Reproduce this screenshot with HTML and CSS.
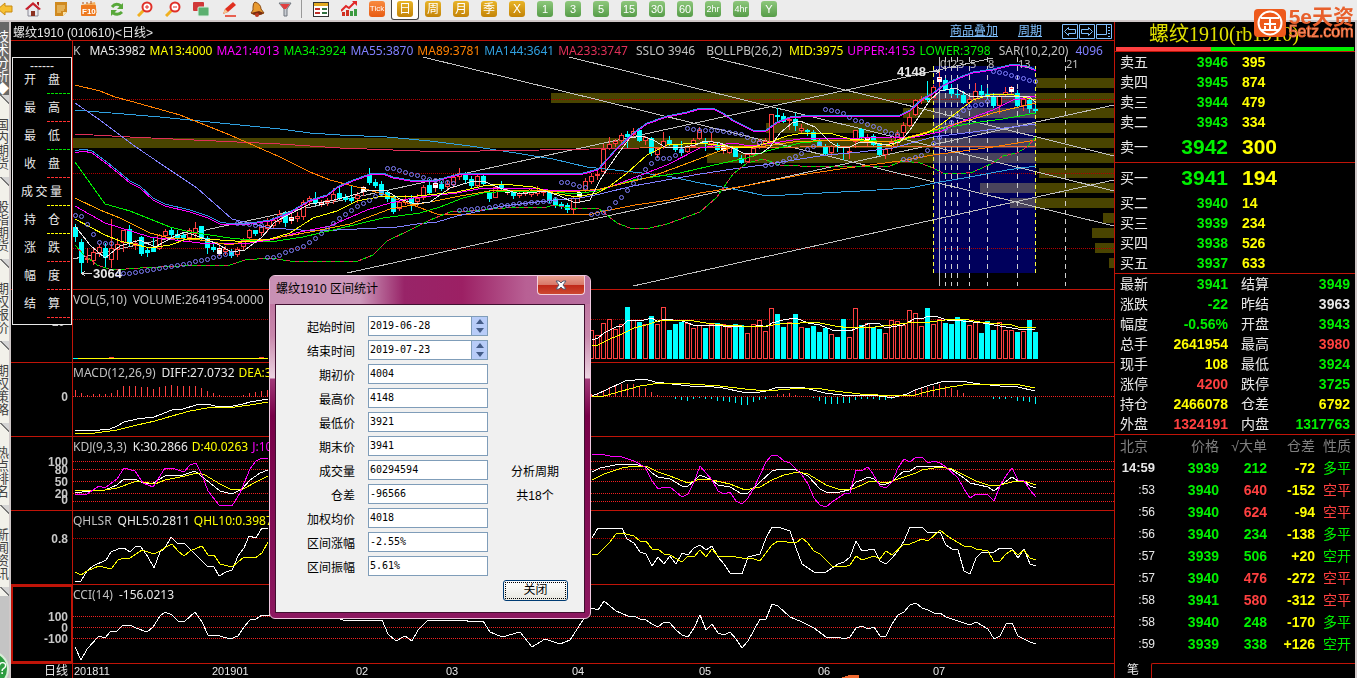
FILE: index.html
```html
<!DOCTYPE html>
<html lang="zh-CN">
<head>
    <meta charset="UTF-8">
    <meta name="viewport" content="width=device-width, initial-scale=1.0">
    <title>螺纹1910 日线</title>
    <link rel="stylesheet" href="styles.css">
</head>
<body>
    <header class="toolbar">
        <button class="tool" title="后退"><svg width="16" height="16" viewBox="0 0 16 16"><path d="M1 8L8 2v3h7v6H8v3z" fill="#f6c033" stroke="#c98a10"/></svg></button>
        <button class="tool" title="首页"><svg width="16" height="16" viewBox="0 0 16 16"><path d="M3 8l5-5 5 5v7H3z" fill="#e8e8ee" stroke="#8a8a96"/><path d="M0 8l8-7 8 7-2 1-6-5-6 5z" fill="#c8202c"/><path d="M12 1h2v4l-2-2z" fill="#a01820"/><path d="M6 10h4v5H6z" fill="#8a3020"/></svg></button>
        <button class="tool" title="资讯"><svg width="16" height="16" viewBox="0 0 16 16"><path d="M2 1h12v10l-4 4H2z" fill="#d08a20"/><path d="M4 5h8M4 7h8M4 9h7M4 11h4" stroke="#f7d68c"/><path d="M10 15v-4h4z" fill="#f8e4b0"/></svg></button>
        <button class="tool" title="F10"><svg width="18" height="16" viewBox="0 0 18 16"><path d="M1 4l14-3 2 11-14 3z" fill="#f5b060"/><rect x="1" y="4" width="15" height="11" rx="1" fill="#ee7a20"/><path d="M3 3V1M7 3V1M11 3V0" stroke="#b05010"/><text x="2" y="13" class="f10">F10</text></svg></button>
        <button class="tool" title="刷新"><svg width="16" height="16" viewBox="0 0 16 16"><path d="M3 6q4-5 9-1" fill="none" stroke="#58a83a" stroke-width="3"/><path d="M14 2v6H8z" fill="#58a83a"/><path d="M13 11q-4 4-9 1" fill="none" stroke="#58a83a" stroke-width="3"/><path d="M2 15V9h6z" fill="#58a83a"/></svg></button>
        <button class="tool" title="放大"><svg width="16" height="16" viewBox="0 0 16 16"><path d="M1 15l6-6" stroke="#f0b020" stroke-width="3"/><circle cx="10" cy="6" r="4.5" fill="#fff" stroke="#e03028" stroke-width="2"/><path d="M8 6h4M10 4v4" stroke="#e03028"/></svg></button>
        <button class="tool" title="缩小"><svg width="16" height="16" viewBox="0 0 16 16"><path d="M1 15l6-6" stroke="#f0b020" stroke-width="3"/><circle cx="10" cy="6" r="4.5" fill="#fff" stroke="#e03028" stroke-width="2"/><path d="M8 6h4" stroke="#e03028"/></svg></button>
        <button class="tool" title="叠加"><svg width="16" height="16" viewBox="0 0 16 16"><rect x="0" y="1" width="11" height="9" rx="1" fill="#d03838"/><rect x="5" y="6" width="11" height="9" rx="1" fill="#5cb070" stroke="#d8efe0"/></svg></button>
        <button class="tool" title="画线"><svg width="16" height="16" viewBox="0 0 16 16"><path d="M2 13l2-5 8-7 3 3-8 7z" fill="#e03020"/><path d="M2 13l2-5 3 3z" fill="#f6c890"/><path d="M4 15h11" stroke="#e86050" stroke-width="2"/></svg></button>
        <button class="tool" title="预警"><svg width="16" height="16" viewBox="0 0 16 16"><path d="M6 1q6 2 6 7l3 4q-7 4-13 0 3-3 2-6 0-4 2-5z" fill="#e89a30" stroke="#8a4a10"/><path d="M2 12q7 4 13 0l-5-2z" fill="#7a2c10"/><circle cx="8" cy="14" r="2" fill="#c03820"/></svg></button>
        <button class="tool" title="筛选"><svg width="16" height="16" viewBox="0 0 16 16"><path d="M2 2h12l-4 6v7H7V8z" fill="#c8ccd2" stroke="#70767e"/><path d="M3 3h10l-4 5H7z" fill="#e04040"/></svg></button>
        <span class="split"></span>
        <button class="tool" title="报价"><svg width="16" height="16" viewBox="0 0 16 16"><rect x=".5" y="1.500" width="15" height="14" fill="#fff" stroke="#333"/><path d="M1 3.500h14" stroke="#e0a820" stroke-width="3"/><path d="M2 8h5M2 12h5" stroke="#c03028" stroke-width="2"/><path d="M9 8h5M9 12h5" stroke="#307040" stroke-width="2"/></svg></button>
        <button class="tool" title="分时"><svg width="16" height="16" viewBox="0 0 16 16"><path d="M1 15v-4h3v4zM5 15V9h3v6z" fill="#d03020"/><path d="M9 15v-5h3v5zM13 15V8h3v7z" fill="#3c9a40"/><path d="M0 10l5-5 3 2 6-6" fill="none" stroke="#e02828" stroke-width="2"/><path d="M11 0h5v5z" fill="#e02828"/></svg></button>
        <button class="tool" title="Tick"><span class="chip tick">Tick</span></button>
        <button class="tool active" title="日线"><span class="chip gold">日</span></button>
        <button class="tool" title="周线"><span class="chip gold">周</span></button>
        <button class="tool" title="月线"><span class="chip gold">月</span></button>
        <button class="tool" title="季线"><span class="chip gold">季</span></button>
        <button class="tool" title="自定义"><span class="chip gold">X</span></button>
        <button class="tool"><span class="chip">1</span></button>
        <button class="tool"><span class="chip">3</span></button>
        <button class="tool"><span class="chip">5</span></button>
        <button class="tool"><span class="chip">15</span></button>
        <button class="tool"><span class="chip">30</span></button>
        <button class="tool"><span class="chip">60</span></button>
        <button class="tool"><span class="chip small">2hr</span></button>
        <button class="tool"><span class="chip small">4hr</span></button>
        <button class="tool"><span class="chip">Y</span></button>
    </header>

    <main class="workspace">
        <nav class="side">
            <button class="tab current">技术分析◆</button>
            <button class="tab">国内期货</button>
            <button class="tab">股指期货</button>
            <button class="tab">期权报价</button>
            <button class="tab">期权策略</button>
            <button class="tab">热点排名</button>
            <button class="tab">新闻资讯</button>
            <span class="help">?</span>
        </nav>

        <section class="charts">
            <div class="caption">
                <span>螺纹1910 (010610)&lt;日线&gt;</span>
                <div class="links">
                    <a href="#">商品叠加</a>
                    <a href="#">周期</a>
                    <div class="winbtns">
                        <button title="左移"><svg width="16" height="15"><path d="M.5.5h15v14H.5zM2.500 7.500l4-4v2h7v4h-7v2z"/></svg></button>
                        <button title="右移"><svg width="16" height="15"><path d="M.5.5h15v14H.5zM13.500 7.500l-4-4v2h-7v4h7v2z"/></svg></button>
                        <button title="布局"><svg width="16" height="15"><path d="M.5.5h15v14H.5zM10.500 0v10.500M0 10.500h10.500M12 3.500h2M12 6.500h2M12 9.500h2M12 12.500h2"/></svg></button>
                    </div>
                </div>
            </div>

            <div class="panel">
                <div class="axis">
                    <div class="summary">
                        <p class="dashes">------</p>
                        <p class="up">开<span>盘</span></p>
                        <p class="down">最<span>高</span></p>
                        <p class="up">最<span>低</span></p>
                        <p class="down">收<span>盘</span></p>
                        <p class="flat wide">成<span>交</span><span>量</span></p>
                        <p class="flat">持<span>仓</span></p>
                        <p class="down">涨<span>跌</span></p>
                        <p class="down">幅<span>度</span></p>
                        <p class="down">结<span>算</span></p>
                    </div>
                </div>
                <div class="plot">
                    <svg class="kline" height="248">
                        <g transform="translate(-73 -41)">
                            <g fill="#4a4400">
                                <rect x="1036" y="78" width="78" height="10"/>
                                <rect x="551" y="93" width="563" height="10"/>
                                <rect x="903" y="108" width="211" height="10"/>
                                <rect x="766" y="123" width="348" height="10"/>
                                <rect x="73" y="138" width="1041" height="10"/>
                                <rect x="707" y="153" width="407" height="10"/>
                                <rect x="1039" y="168" width="75" height="10"/>
                                <rect x="980" y="183" width="134" height="10"/>
                                <rect x="1010" y="198" width="104" height="10"/>
                                <rect x="1103" y="213" width="11" height="10"/>
                                <rect x="1092" y="228" width="22" height="10"/>
                                <rect x="1095" y="243" width="19" height="10"/>
                                <rect x="1109" y="258" width="5" height="10"/>
                            </g>
                            <rect class="range" x="933" y="66" width="103" height="207"/>
                            <path class="grid" d="M73 99.500H1114M73 173.500H1114M73 248.500H1114"/>
                            <path class="gann" d="M423 57L1114 226M569 57L1114 191M711 57L1114 156M73 259L993 58M347 273L1114 105M633 286L1114 180"/>
                            <path class="fib" d="M945.500 57V286M951.500 57V286M957.500 57V286M969.500 57V286M987.500 57V286M1017.500 57V286M1065.500 57V286"/>
                            <path class="gann" d="M939.500 57V286"/>
                            <path class="edge" d="M933.500 66V273M1035.500 66V273"/>
                            <g id="candles"></g>
                            <g class="line">
                                <polyline stroke="#30a0e0" points="75,110 160,117 280,129 310,133 340,135 387,137 430,141 470,146 503,151 553,159 587,167 633,172 667,176 700,183 733,189 767,196 803,194 860,191 910,188 940,182 970,177 1007,170 1036,166"/>
                                <polyline stroke="#e03058" points="75,134 130,137 280,144 340,148 420,151 480,151 540,150 640,148"/>
                                <polyline stroke="#f06a30" points="640,148 800,147 1036,146"/>
                                <polyline stroke="#ff8000" points="75,85 100,91 115,97 130,101 180,115 230,135 280,157 310,172 330,180 380,193 410,204 437,214 540,214 570,215 592,214 600,212 635,205 670,200 700,193 745,186 765,182 800,175 840,169 870,165 900,161 933,155 993,147 1036,140"/>
                                <polyline stroke="#8080ff" points="75,103 100,120 133,145 167,168 197,188 232,219 253,224 270,228 317,231 397,227 417,224 437,222 457,216 503,206 537,202 557,200 580,198 600,194 633,186 700,174 733,169 763,165 800,159 827,155 860,152 893,148 933,137 1036,124"/>
                                <polyline stroke="#ff00ff" points="75,153 83,151 92,153 107,164 118,173 130,183 140,188 153,200 165,206 190,212 208,218 220,224 232,225 250,224 270,221 290,213 310,201 327,196 337,188 353,181 373,174 383,174 393,178 410,181 437,181 447,178 463,174 520,174 550,175 583,174 598,170 617,149 633,134 647,124 667,117 687,113 700,109 713,109 723,114 733,121 753,131 766,131 777,123 790,118 813,116 900,116 910,111 923,99 933,94 943,86 960,78 973,73 993,70 1013,65 1027,67 1036,71"/>
                                <polyline stroke="#3090e8" points="75,151 83,149 92,151 107,162 118,171 130,181 140,186 153,198 165,204 190,210 208,216 220,222 232,224 250,223 270,220 290,212 310,200 327,195 337,187 353,180 373,173 383,173 393,177 410,180 437,180 447,177 463,173 520,173 550,174 583,173 598,169 617,148 633,133 647,123 667,116 687,112 700,108 713,108 723,113 733,120 753,130 766,130 777,122 790,117 813,115 900,115 910,110 923,98 933,93 943,85 960,77 973,72 993,69 1013,64 1027,66 1036,70"/>
                                <polyline id="lower" stroke="#e03050" points="75,245 84,255 97,265 112,270 140,268 200,265 230,265 245,260 270,258 290,261 333,262 358,261 373,255 387,241 410,230 430,220 450,212 470,211 517,207 547,207 553,205 570,208 598,208 617,223 630,228 650,228 667,224 700,212 717,197 733,174 747,163 763,159 780,165 800,166 860,166 890,166 903,161 920,163 933,168 943,173 960,174 973,172 993,163 1003,156 1017,153 1027,147 1036,137"/>
                                <polyline stroke="#00e000" stroke-dasharray="5 4" points="75,245 84,255 97,265 112,270 140,268 200,265 230,265 245,260 270,258 290,261 333,262 358,261 373,255 387,241 410,230 430,220 450,212 470,211 517,207 547,207 553,205 570,208 598,208 617,223 630,228 650,228 667,224 700,212 717,197 733,174 747,163 763,159 780,165 800,166 860,166 890,166 903,161 920,163 933,168 943,173 960,174 973,172 993,163 1003,156 1017,153 1027,147 1036,137"/>
                                <polyline stroke="#00f000" points="75,162 105,204 130,211 170,227 190,232 230,238 270,242 303,237 337,229 383,218 420,213 440,207 463,198 483,193 510,191 557,192 573,194 597,191 633,180 680,173 723,163 747,158 767,151 800,143 833,140 860,140 893,142 913,137 940,129 973,123 1003,119 1036,113"/>
                                <polyline stroke="#ff00ff" points="75,206 105,223 150,237 200,243 250,243 270,240 300,232 330,226 367,210 390,203 413,198 457,193 483,188 530,188 557,191 597,190 610,187 667,165 700,148 733,143 750,146 773,143 800,139 817,138 860,138 893,137 910,138 940,132 960,122 993,110 1013,100 1036,96"/>
                                <polyline stroke="#ffa000" points="75,198 100,210 120,218 150,233 170,238 200,240 230,245 250,240 270,239 310,232 350,224 390,209 430,202 460,196 490,191 530,190 570,192 600,189 650,177 683,165 717,152 733,147 766,146 793,142 833,140 860,141 890,142 927,132 973,119 993,113 1036,103"/>
                                <polyline stroke="#ffff00" points="75,219 105,235 120,241 150,248 170,245 190,238 220,240 250,242 270,239 290,233 313,218 337,211 357,201 383,196 417,196 457,192 483,186 503,184 533,187 553,193 577,197 597,193 610,186 627,173 647,155 667,145 700,143 733,147 750,148 770,142 787,136 803,133 833,134 850,139 860,139 890,146 907,138 927,133 943,123 960,110 973,100 990,95 1010,94 1027,98 1036,100"/>
                                <polyline stroke="#e8e8e8" points="75,226 90,245 105,258 120,246 140,240 155,247 175,236 185,232 200,237 215,243 232,252 245,250 262,237 275,222 290,214 310,204 330,201 350,196 370,190 385,190 400,199 415,204 430,202 450,188 470,182 483,181 500,188 520,194 545,191 560,196 575,203 590,200 600,180 615,158 630,138 643,136 655,141 665,147 680,148 695,145 705,141 720,143 735,149 745,154 762,153 770,147 780,133 792,123 800,121 815,127 830,142 840,148 850,147 860,142 870,142 885,145 900,142 910,130 920,115 930,100 940,91 955,88 970,96 990,97 1010,96 1030,97 1036,103"/>
                            </g>
                            <g id="sar"></g>
                            <g class="fibtext">
                                <text x="940" y="68">0</text><text x="946" y="68">1</text><text x="951" y="68">2</text><text x="958" y="68">3</text><text x="970" y="68">5</text><text x="988" y="68">8</text><text x="1018" y="68">13</text><text x="1066" y="68">21</text>
                            </g>
                            <path class="arrow" d="M939 71.500H931M936 69L939 71.500L936 74M82 273.500H92M85 271L82 273.500L85 276"/>
                            <text class="mark" x="897" y="76">4148</text>
                            <text class="mark" x="93" y="278">3064</text>
                        </g>
                    </svg>
                    <div class="legend">
                        <b class="k">K</b><span>MA5:3982</span><span class="yellow">MA13:4000</span><span class="magenta">MA21:4013</span><span class="green">MA34:3924</span><span class="violet">MA55:3870</span><span class="orange">MA89:3781</span><span class="sky">MA144:3641</span><span class="rose">MA233:3747</span><b class="sep">SSLO 3946</b><b class="sep">BOLLPB(26,2)</b><span class="yellow">MID:3975</span><span class="magenta">UPPER:4153</span><span class="green">LOWER:3798</span><b class="sep">SAR(10,2,20)</b><span class="violet">4096</span>
                    </div>
                </div>
            </div>

            <div class="panel">
                <div class="axis"><svg height="72"><text x="54" y="36">10</text></svg></div>
                <div class="plot">
                    <svg height="72">
                        <g transform="translate(-73 -290)">
                            <path class="grid" d="M73 319.500H1114"/>
                            <path d="M73 358.500H80" stroke="#00ffff"/>
                            <path d="M78 358.500H268" stroke="#ffff00"/>
                            <path d="M109 357.500h5M259 357.500h5" stroke="#ff4040"/>
                            <g id="volume"></g>
                            <g class="line">
                                <polyline stroke="#ffffff" points="592,340 598,338 604,333 616,327 622,326 628,320 640,321 652,318 658,322 664,319 682,321 688,323 693,325 723,326 742,326 753,327 760,325 766,327 772,323 783,320 796,318 808,323 820,325 832,330 850,331 860,327 870,323 880,324 885,328 903,325 916,318 922,319 928,316 935,316 947,320 963,321 983,323 1000,326 1018,329 1035,329"/>
                                <polyline stroke="#ffff00" points="592,346 598,345 610,339 622,334 634,328 646,325 658,321 670,320 688,320 706,323 723,325 742,326 754,327 766,326 780,324 800,323 815,322 835,326 850,328 875,327 900,324 915,322 930,322 945,320 963,319 980,322 1000,324 1012,325 1018,327 1036,328"/>
                            </g>
                        </g>
                    </svg>
                    <div class="legend"><b>VOL(5,10)</b><b>VOLUME:2641954.0000</b></div>
                </div>
            </div>

            <div class="panel">
                <div class="axis"><svg height="73"><text x="57" y="38">0</text></svg></div>
                <div class="plot">
                    <svg height="73">
                        <g transform="translate(-73 -363)">
                            <path class="grid bright" d="M73 396.500H1114"/>
                            <g id="macd"></g>
                            <g class="line">
                                <polyline stroke="#ffffff" points="75,430 90,431 110,429 117,426 124,422 137,419 154,417 172,410 183,409 196,405 207,404 215,406 233,406 243,404 250,402 268,399"/>
                                <polyline stroke="#ffff00" points="75,433 95,433 117,430 137,425 155,421 172,416 190,411 207,408 235,407 250,405 268,402"/>
                                <polyline stroke="#ffffff" points="592,396 604,391 625,381 645,379 655,382 690,386 705,386 723,388 742,392 754,393 766,391 775,388 790,387 805,388 825,393 850,396 870,395 887,397 895,397 907,394 915,390 930,385 945,381 960,381 980,384 1000,386 1018,387 1035,391"/>
                                <polyline stroke="#ffff00" points="592,397 604,396 622,391 640,386 660,383 690,384 720,386 745,389 766,391 790,389 815,388 835,391 860,394 895,396 915,395 930,391 950,387 970,384 1000,384 1020,385 1035,388"/>
                            </g>
                        </g>
                    </svg>
                    <div class="legend"><b>MACD(12,26,9)</b><span>DIFF:27.0732</span><span class="yellow">DEA:35.1208</span></div>
                </div>
            </div>

            <div class="panel">
                <div class="axis"><svg height="73"><text x="57" y="29">100</text><text x="57" y="37">80</text><text x="57" y="49">50</text><text x="57" y="61">20</text><text x="57" y="67">0</text></svg></div>
                <div class="plot">
                    <svg height="73">
                        <g transform="translate(-73 -437)">
                            <path class="grid bright" d="M73 461.500H1114M73 469.500H1114M73 481.500H1114M73 493.500H1114M73 501.500H1114"/>
                            <g class="line">
                                <polyline stroke="#ffffff" points="75,493 90,491 105,490 117,485 124,479 135,479 143,483 153,483 165,476 183,475 195,471 205,479 220,491 232,494 242,489 250,480 260,473 268,470"/>
                                <polyline stroke="#ffff00" points="75,491 105,490 117,488 137,481 155,484 165,480 185,476 197,473 205,475 220,484 232,490 243,489 256,482 268,476"/>
                                <polyline stroke="#ff00ff" points="75,495 87,494 99,486 105,488 117,479 124,468 135,471 143,483 153,487 165,468 172,468 184,472 190,465 196,463 202,475 208,491 219,505 232,506 240,493 250,469 256,461 262,458 268,458"/>
                                <polyline stroke="#ffffff" points="592,472 600,468 615,465 634,464 646,467 652,473 658,477 670,479 682,486 688,486 694,481 700,475 712,480 718,485 730,487 742,494 748,493 760,482 772,471 780,469 796,470 808,476 820,489 826,492 840,492 849,490 856,482 862,480 868,477 874,479 880,484 886,484 892,482 898,476 904,471 910,471 916,467 940,466 952,470 964,478 970,483 988,487 994,491 1000,486 1012,477 1018,481 1024,481 1030,486 1036,488"/>
                                <polyline stroke="#ffff00" points="592,480 604,474 622,468 634,466 646,466 658,472 670,476 688,483 700,479 712,480 730,484 745,490 760,487 772,480 784,475 798,472 808,474 818,480 826,485 838,489 850,490 862,485 868,482 874,481 886,483 898,479 916,473 922,470 940,467 952,469 964,475 976,481 988,485 1000,485 1012,482 1024,481 1036,485"/>
                                <polyline stroke="#ff00ff" points="592,455 600,454 610,456 622,457 634,461 645,467 652,481 658,489 664,487 670,487 682,497 688,494 694,482 700,466 712,480 718,491 724,494 730,492 736,501 742,504 748,498 754,488 766,462 772,455 778,456 784,461 790,463 802,475 808,484 814,498 820,505 826,507 832,502 844,494 850,493 856,470 863,470 868,467 873,474 880,486 886,488 892,482 898,468 904,459 910,462 916,457 922,457 928,463 934,461 940,463 946,467 958,478 964,489 970,498 976,494 988,495 994,501 1000,486 1006,476 1012,468 1018,480 1024,481 1030,490 1036,497"/>
                            </g>
                        </g>
                    </svg>
                    <div class="legend"><b>KDJ(9,3,3)</b><span>K:30.2866</span><span class="yellow">D:40.0263</span><span class="magenta">J:10.8072</span></div>
                </div>
            </div>

            <div class="panel">
                <div class="axis"><svg height="73"><text x="57" y="32">0.8</text></svg></div>
                <div class="plot">
                    <svg height="73">
                        <g transform="translate(-73 -511)">
                            <path class="grid" d="M73 538.500H1114"/>
                            <g class="line">
                                <polyline stroke="#ffffff" points="75,581 81,581 87,571 93,566 106,560 111,552 118,549 124,548 130,552 136,546 141,547 148,557 154,568 160,552 165,548 171,537 178,544 184,543 196,555 207,566 214,567 219,576 226,572 232,570 238,556 244,548 249,536 256,538 262,528 268,528"/>
                                <polyline stroke="#ffff00" points="75,572 81,575 87,571 99,566 111,569 118,560 124,558 130,558 142,550 154,554 160,551 166,547 172,544 178,551 184,556 190,551 202,546 208,555 214,555 220,564 232,567 244,557 255,558 262,553 268,542"/>
                                <polyline stroke="#ffffff" points="592,538 598,528 622,528 627,539 634,543 640,552 646,554 652,566 658,557 664,564 670,556 676,564 682,553 688,555 694,548 700,545 706,550 712,546 718,557 724,564 730,573 736,573 742,574 748,557 760,554 766,538 772,527 778,527 790,531 796,548 802,564 814,572 820,573 826,572 838,564 844,562 850,557 856,541 862,551 874,549 880,561 886,564 892,558 898,551 904,541 910,527 922,527 928,533 940,532 946,545 952,549 958,550 964,571 970,574 976,558 982,552 994,552 1000,548 1012,549 1018,558 1024,549 1030,564 1036,566"/>
                                <polyline stroke="#ffff00" points="592,554 598,554 610,542 616,534 622,533 634,536 640,541 646,541 652,549 658,549 664,554 670,555 682,562 688,556 694,557 700,550 706,557 712,549 718,556 730,556 742,558 754,559 760,561 766,553 772,545 778,541 796,543 802,538 808,543 814,551 820,554 832,566 844,567 850,565 856,556 862,560 874,556 880,559 886,551 892,555 904,544 910,544 922,539 928,541 940,530 946,535 952,539 964,546 970,546 976,549 988,551 994,562 1000,561 1006,554 1012,550 1018,555 1024,550 1030,558 1036,560"/>
                            </g>
                        </g>
                    </svg>
                    <div class="legend"><b>QHLSR</b><span>QHL5:0.2811</span><span class="yellow">QHL10:0.3987</span></div>
                </div>
            </div>

            <div class="panel selected">
                <div class="axis"><svg height="74"><text x="55" y="34">100</text><text x="55" y="45">0</text><text x="55" y="56">-100</text></svg></div>
                <div class="plot">
                    <svg height="78">
                        <g transform="translate(-73 -585)">
                            <path class="grid bright" d="M73 616.500H1114M73 627.500H1114M73 638.500H1114"/>
                            <g class="line">
                                <polyline stroke="#ffffff" points="75,647 81,660 87,649 99,636 105,638 111,631 117,631 123,625 130,625 136,628 147,632 153,627 160,616 165,612 172,615 178,621 184,622 195,612 202,622 208,635 220,636 230,639 238,636 244,627 250,620 256,619 262,615 268,616 290,600 343,620 382,620 388,634 396,641 405,636 412,641 418,630 427,621 447,620 465,620 470,622 483,621 490,632 502,637 520,632 532,647 545,639 560,644 570,640 583,620 592,608 598,610 604,601 616,611 628,616 634,616 640,619 646,620 652,624 658,627 664,622 670,623 676,630 682,635 688,637 694,628 700,615 706,630 712,624 718,633 724,635 730,632 736,639 742,648 748,641 760,619 766,619 772,604 778,606 790,617 802,622 814,628 826,637 838,637 844,639 850,637 856,628 862,626 868,629 874,627 880,636 886,636 892,624 898,615 904,612 910,605 916,603 922,608 928,610 934,613 940,613 946,617 958,621 970,625 976,622 988,629 994,639 1000,636 1006,624 1012,623 1018,636 1030,642 1036,644"/>
                            </g>
                        </g>
                    </svg>
                    <div class="legend"><b>CCI(14)</b><span>-156.0213</span></div>
                </div>
            </div>

            <div class="panel dates">
                <div class="axis">日线</div>
                <div class="plot">
                    <svg height="14">
                        <text x="1" y="11">201811</text><text x="139" y="11">201901</text><text x="283" y="11">02</text><text x="373" y="11">03</text><text x="499" y="11">04</text><text x="626" y="11">05</text><text x="745" y="11">06</text><text x="860" y="11">07</text>
                        <path d="M768 14q8-4 18-3v3z" fill="#f26a30"/>
                    </svg>
                </div>
            </div>
        </section>

        <aside class="quote">
            <h1>螺纹1910(rb1910)</h1>
            <div class="ratio"><span class="sell"></span><span class="buy"></span></div>
            <table class="book">
                <tr><th>卖五</th><td class="green">3946</td><td class="yellow">395</td></tr>
                <tr><th>卖四</th><td class="green">3945</td><td class="yellow">874</td></tr>
                <tr><th>卖三</th><td class="green">3944</td><td class="yellow">479</td></tr>
                <tr><th>卖二</th><td class="green">3943</td><td class="yellow">334</td></tr>
                <tr class="best"><th>卖一</th><td class="green">3942</td><td class="yellow">300</td></tr>
            </table>
            <table class="book">
                <tr class="best"><th>买一</th><td class="green">3941</td><td class="yellow">194</td></tr>
                <tr><th>买二</th><td class="green">3940</td><td class="yellow">14</td></tr>
                <tr><th>买三</th><td class="green">3939</td><td class="yellow">234</td></tr>
                <tr><th>买四</th><td class="green">3938</td><td class="yellow">526</td></tr>
                <tr><th>买五</th><td class="green">3937</td><td class="yellow">633</td></tr>
            </table>
            <table class="info">
                <tr><th>最新</th><td class="green">3941</td><th>结算</th><td class="green">3949</td></tr>
                <tr><th>涨跌</th><td class="green">-22</td><th>昨结</th><td>3963</td></tr>
                <tr><th>幅度</th><td class="green">-0.56%</td><th>开盘</th><td class="green">3943</td></tr>
                <tr><th>总手</th><td class="yellow">2641954</td><th>最高</th><td class="red">3980</td></tr>
                <tr><th>现手</th><td class="yellow">108</td><th>最低</th><td class="green">3924</td></tr>
                <tr><th>涨停</th><td class="red">4200</td><th>跌停</th><td class="green">3725</td></tr>
                <tr><th>持仓</th><td class="yellow">2466078</td><th>仓差</th><td class="yellow">6792</td></tr>
                <tr><th>外盘</th><td class="red">1324191</td><th>内盘</th><td class="green">1317763</td></tr>
            </table>
            <table class="ticks">
                <tr><th>北京</th><th>价格</th><th>√大单</th><th>仓差</th><th>性质</th></tr>
                <tr><td class="now">14:59</td><td class="green">3939</td><td class="green">212</td><td class="yellow">-72</td><td class="green">多平</td></tr>
                <tr><td>:53</td><td class="green">3940</td><td class="red">640</td><td class="yellow">-152</td><td class="red">空平</td></tr>
                <tr><td>:56</td><td class="green">3940</td><td class="red">624</td><td class="yellow">-94</td><td class="red">空平</td></tr>
                <tr><td>:56</td><td class="green">3940</td><td class="green">234</td><td class="yellow">-138</td><td class="green">多平</td></tr>
                <tr><td>:57</td><td class="green">3939</td><td class="green">506</td><td class="yellow">+20</td><td class="green">空开</td></tr>
                <tr><td>:57</td><td class="green">3940</td><td class="red">476</td><td class="yellow">-272</td><td class="red">空平</td></tr>
                <tr><td>:58</td><td class="green">3941</td><td class="red">580</td><td class="yellow">-312</td><td class="red">空平</td></tr>
                <tr><td>:58</td><td class="green">3940</td><td class="green">248</td><td class="yellow">-170</td><td class="green">多平</td></tr>
                <tr><td>:59</td><td class="green">3939</td><td class="green">338</td><td class="yellow">+126</td><td class="green">空开</td></tr>
            </table>
            <div class="foot"><button>笔</button><span></span></div>
        </aside>
    </main>

    <div class="brand">
        <svg width="32" height="28" viewBox="0 0 32 28"><rect width="32" height="28" rx="4" fill="#ee5a1c"/><circle cx="16" cy="14" r="11.500" fill="none" stroke="#fff" stroke-width="2"/><path d="M7 9h18M10 15h12M16 9v12M7 21h18M11 17v3M21 17v3" stroke="#fff" stroke-width="2" fill="none"/></svg>
        <div><strong>5e天资</strong><em>5etz.com</em></div>
    </div>

    <div class="dialog" role="dialog" aria-labelledby="dlgtitle">
        <div class="titlebar">
            <span id="dlgtitle">螺纹1910 区间统计</span>
            <button class="close" title="关闭窗口"><svg width="12" height="10" viewBox="0 0 12 10"><path d="M1 1h3l2 2 2-2h3L8 5l3 4H8L6 7 4 9H1l3-4z" fill="#fff" stroke="#555c70"/></svg></button>
        </div>
        <form class="stats">
            <div class="fields">
                <label for="start">起始时间</label>
                <div class="spin"><input id="start" type="text" value="2019-06-28"><div class="arrows"><button type="button" title="加"><svg width="8" height="5"><path d="M0 5l4-5 4 5z"/></svg></button><button type="button" title="减"><svg width="8" height="5"><path d="M0 0l4 5 4-5z"/></svg></button></div></div>
                <label for="end">结束时间</label>
                <div class="spin"><input id="end" type="text" value="2019-07-23"><div class="arrows"><button type="button" title="加"><svg width="8" height="5"><path d="M0 5l4-5 4 5z"/></svg></button><button type="button" title="减"><svg width="8" height="5"><path d="M0 0l4 5 4-5z"/></svg></button></div></div>
                <label for="first">期初价</label><input id="first" type="text" value="4004">
                <label for="high">最高价</label><input id="high" type="text" value="4148">
                <label for="low">最低价</label><input id="low" type="text" value="3921">
                <label for="last">期末价</label><input id="last" type="text" value="3941">
                <label for="vol">成交量</label><input id="vol" type="text" value="60294594"><span class="note">分析周期</span>
                <label for="oi">仓差</label><input id="oi" type="text" value="-96566"><span class="note">共18个</span>
                <label for="avg">加权均价</label><input id="avg" type="text" value="4018">
                <label for="chg">区间涨幅</label><input id="chg" type="text" value="-2.55%">
                <label for="amp">区间振幅</label><input id="amp" type="text" value="5.61%">
            </div>
            <button class="ok" type="button"><span>关闭</span></button>
        </form>
    </div>
    <script src="chart.js"></script>
</body>
</html>
```
FILE: styles.css
```css
* {
    box-sizing: border-box;
}

body {
    margin: 0;
    height: 100vh;
    display: flex;
    flex-direction: column;
    overflow: hidden;
    background: #000;
    color: #e8e8e8;
    font-family: "Liberation Sans", "Noto Sans CJK SC", sans-serif;
    font-size: 12px;
}

button {
    border: 0;
    padding: 0;
    background: none;
    font-family: inherit;
    color: inherit;
}

svg {
    display: block;
}

.yellow { color: #ffff00; }
.magenta { color: #ff00ff; }
.green { color: #00f000; }
.violet { color: #8080ff; }
.orange { color: #ff8000; }
.sky { color: #30a0e0; }
.rose { color: #e03058; }
.red { color: #ff4040; }

/* toolbar */
.toolbar {
    display: flex;
    height: 22px;
    flex: none;
    background: #ececec;
    border-bottom: 2px solid #d0c8c8;
}

.tool {
    width: 28px;
    height: 18px;
    flex: none;
    display: flex;
    align-items: center;
    justify-content: center;
}

.tool:first-child {
    margin-left: -9px;
}

.tool.active {
    height: 20px;
    padding-bottom: 2px;
    background: #fff;
    border: 1px solid #444;
    border-top: 0;
    border-radius: 0 0 3px 3px;
}

.split {
    width: 8px;
    height: 18px;
    border-left: 1px solid #999;
    margin-left: 2px;
    margin-right: -2px;
}

.f10 {
    font-size: 8px;
    font-weight: bold;
    fill: #fff;
}

.chip {
    width: 16px;
    height: 16px;
    line-height: 16px;
    border-radius: 3px;
    text-align: center;
    color: #fff;
    font-size: 11px;
    background: linear-gradient(#8ec87c, #569c48);
}

.chip.gold {
    font-size: 12px;
    background: linear-gradient(#e8b428, #c48408);
}

.chip.tick {
    font-size: 8px;
    background: linear-gradient(#f88a40, #e85c14);
}

.chip.small {
    font-size: 9px;
}

/* workspace */
.workspace {
    flex: 1;
    min-height: 0;
    display: flex;
}

.side {
    width: 11px;
    flex: none;
    overflow: hidden;
    display: flex;
    flex-direction: column;
    background: #c4c4c4;
    border-right: 2px solid #d0c8c8;
}

.tab {
    position: relative;
    width: 16px;
    height: 82px;
    flex: none;
    margin-left: -7px;
    padding-bottom: 2px;
    writing-mode: vertical-rl;
    text-align: center;
    font-size: 13px;
    line-height: 16px;
    white-space: nowrap;
    color: #444;
    background: #f2f1ea;
}

.tab.current {
    background: #686868;
    color: #fff;
}

.tab::after {
    content: "";
    position: absolute;
    left: 7px;
    right: 0;
    bottom: 0;
    height: 9px;
    background: linear-gradient(to top right, #f2f1ea 46%, #777 46%, #777 56%, #d4d4d4 56%);
}

.help {
    width: 36px;
    height: 36px;
    flex: none;
    margin: auto 0 -9px -27px;
    border-radius: 18px;
    background: #2c9c40;
    border: 2px solid #d8efd8;
    color: #fff;
    font-size: 16px;
    line-height: 32px;
    text-align: right;
}

.charts {
    flex: 1;
    min-width: 0;
    display: flex;
    flex-direction: column;
}

.caption {
    height: 19px;
    flex: none;
    display: flex;
    align-items: center;
    justify-content: space-between;
    padding-left: 2px;
    border-bottom: 1px solid #c01408;
}

.links {
    display: flex;
    gap: 20px;
    align-items: center;
    line-height: 16px;
}

.links a {
    color: #80c0ff;
}

.winbtns {
    display: flex;
    gap: 1px;
    padding-right: 2px;
}

.winbtns path {
    fill: none;
    stroke: #80c0ff;
}

.panel {
    flex: none;
    display: flex;
    border-bottom: 1px solid #c01408;
}

.axis {
    width: 62px;
    flex: none;
    position: relative;
    border-right: 1px solid #c01408;
}

.axis svg {
    width: 100%;
}

.axis text {
    font-size: 12px;
    font-weight: bold;
    fill: #c8c8c8;
    text-anchor: end;
}

.plot {
    flex: 1;
    min-width: 0;
    display: grid;
}

.plot > * {
    grid-area: 1 / 1;
}

.plot svg {
    width: 100%;
}

.plot path,
.plot polyline {
    shape-rendering: crispEdges;
}

.legend {
    height: 18px;
    display: flex;
    gap: 4px;
    align-items: center;
    overflow: hidden;
    white-space: nowrap;
    font-family: "Noto Sans", sans-serif;
    font-size: 12px;
}

.legend b {
    font-weight: normal;
    color: #c0c0c0;
    padding-right: 2px;
}

.legend .k {
    padding-right: 5px;
}

.legend .sep {
    padding: 0 3px 0 4px;
}

.selected .axis {
    border: 2px solid #c01408;
}

.summary {
    position: absolute;
    z-index: 2;
    top: 16px;
    left: 1px;
    right: 0;
    height: 268px;
    background: #000;
    border: 1px solid #e8e8e8;
    padding: 1px 1px 0 0;
}

.summary p {
    display: flex;
    justify-content: space-between;
    height: 28px;
    margin: 0;
    padding: 0 10px 0 11px;
    line-height: 26px;
    background: repeating-linear-gradient(90deg, currentColor 0 3px, #000 3px 4px) right 0 bottom 1px / 23px 1px no-repeat;
    -webkit-text-fill-color: #e8e8e8;
}

.summary .wide {
    padding: 0 8px;
}

.summary .dashes {
    display: block;
    height: 8px;
    line-height: 14px;
    text-align: center;
    background: none;
}

.summary .up { color: #00e000; }
.summary .down { color: #ff3030; }
.summary .flat { color: #ffff00; }

/* chart drawing */
.grid {
    stroke: #b00000;
    stroke-dasharray: 1 1;
}

.grid.bright {
    stroke: #f02020;
}

.gann {
    fill: none;
    stroke: #c0c0c0;
}

.fib {
    stroke: #d0d0d0;
    stroke-dasharray: 5 4;
}

.edge {
    stroke: #ffff40;
    stroke-dasharray: 4 3;
}

.range {
    fill: #00005c;
    mix-blend-mode: screen;
}

.line polyline {
    fill: none;
}

.arrow {
    fill: none;
    stroke: #d8d8d8;
}

.mark {
    font-size: 13px;
    font-weight: bold;
    fill: #e8e8e8;
}

.fibtext {
    font-family: "Noto Sans", sans-serif;
    font-size: 11px;
    fill: #c0c0c0;
}

.up-body { fill: #000; stroke: #ff4040; }
.up-wick { stroke: #ff4040; }
.down-body { fill: #00ffff; }
.down-wick { stroke: #00ffff; }
.sar-dot { fill: none; stroke: #8080ff; }

.dates {
    border-bottom: 0;
}

.dates .axis {
    line-height: 14px;
    padding-right: 4px;
    text-align: right;
}

.dates text {
    font-size: 11px;
    fill: #e8e8e8;
}

/* quote panel */
.quote {
    width: 243px;
    flex: none;
    border-left: 1px solid #c01408;
    border-right: 2px solid #d0c8c8;
    display: flex;
    flex-direction: column;
}

.quote h1 {
    margin: 0;
    height: 25px;
    line-height: 25px;
    padding-left: 34px;
    font-family: "Liberation Serif", "Noto Sans CJK SC", serif;
    font-size: 20px;
    font-weight: normal;
    color: #e0e000;
}

.ratio {
    display: flex;
    height: 5px;
    flex: none;
    padding: 0 1px;
    border-bottom: 1px solid #c01408;
}

.sell {
    flex: 2;
    background: #ff4040;
}

.buy {
    flex: 3;
    background: #00f000;
}

.quote table {
    width: 100%;
    flex: none;
    table-layout: fixed;
    border-collapse: collapse;
}

.quote tr {
    height: 20px;
}

.quote th,
.quote td {
    padding: 0;
    line-height: 20px;
    font-size: 14px;
    white-space: nowrap;
}

.quote th {
    font-weight: normal;
    text-align: left;
    padding-left: 5px;
}

.quote td {
    font-weight: bold;
    text-align: right;
}

.book,
.info {
    border-bottom: 1px solid #c01408;
}

.book th {
    width: 50px;
}

.book td:nth-child(2) {
    width: 63px;
}

.quote .book td:last-child {
    text-align: left;
    padding-left: 14px;
}

.quote .best {
    height: 30px;
}

.quote .best td {
    font-size: 21px;
}

.info th:first-child {
    width: 50px;
}

.info td:nth-child(2) {
    width: 63px;
}

.quote .info th:nth-child(3) {
    width: 50px;
    padding-left: 13px;
}

.quote .info td:last-child {
    padding-right: 5px;
}

.quote .ticks tr {
    height: 22px;
}

.quote .ticks th {
    text-align: right;
    padding-left: 0;
    color: #808080;
}

.quote .ticks th:first-child {
    width: 40px;
    text-align: left;
    padding-left: 5px;
}

.quote .ticks td:first-child {
    font-size: 12px;
    font-weight: normal;
}

.quote .ticks td.now {
    font-size: 13px;
    font-weight: bold;
}

.ticks th:nth-child(2) {
    width: 64px;
}

.ticks th:nth-child(3),
.ticks th:nth-child(4) {
    width: 48px;
}

.quote .ticks th:last-child,
.quote .ticks td:last-child {
    font-weight: normal;
    padding: 0 4px 0 0;
}

.foot {
    margin-top: auto;
    height: 15px;
    display: flex;
}

.foot button {
    width: 36px;
    font-size: 12px;
    line-height: 15px;
}

.foot span {
    flex: 1;
    border: 1px solid #c01408;
    border-width: 1px 0 0 1px;
    border-radius: 2px 0 0 0;
}

/* brand */
.brand {
    position: absolute;
    z-index: 3;
    top: 9px;
    right: 3px;
    display: flex;
    gap: 3px;
}

.brand strong,
.brand em {
    display: block;
    white-space: nowrap;
    font-style: normal;
}

.brand strong {
    font-size: 21px;
    line-height: 15px;
    color: #e8602c;
}

.brand em {
    font-size: 16px;
    line-height: 15px;
    color: #f8e8e0;
    -webkit-text-stroke: 1px #e8602c;
}

/* dialog */
.dialog {
    position: absolute;
    z-index: 4;
    top: 275px;
    left: 269px;
    width: 322px;
    padding: 0 5px 5px;
    border: 1px solid #f0c8e0;
    border-radius: 6px;
    background: linear-gradient(#b86898, #c888ac 60px, #ecd4e2 102px, #a03878 103px, #780048 140px, #8c1860 100%);
}

.titlebar {
    display: flex;
    justify-content: space-between;
    height: 28px;
    margin: 0 -5px;
    padding: 0 5px 0 6px;
    border-radius: 5px 5px 0 0;
    background: linear-gradient(90deg, #c890b4 0, #cc98ba 28%, #982468 42%, #9c2064 60%, #b86094 80%, #b870a0);
    color: #000;
    line-height: 26px;
}

.close {
    width: 48px;
    height: 19px;
    display: flex;
    align-items: center;
    justify-content: center;
    border: 1px solid #f4d0dc;
    border-top: 0;
    border-radius: 0 0 4px 4px;
    background: linear-gradient(#e8a090, #d87868 48%, #c02818 50%, #cc4830);
}

.stats {
    background: #f0f0f0;
    border: 1px solid #401030;
    color: #000;
    padding: 11px 16px 11px 0;
    display: flex;
    flex-direction: column;
    gap: 4px;
}

.fields {
    display: grid;
    grid-template-columns: 79px 120px 48px;
    grid-auto-rows: 20px;
    column-gap: 13px;
    row-gap: 4px;
    align-items: center;
}

.fields label {
    grid-column: 1;
    text-align: right;
}

.fields > input,
.spin {
    grid-column: 2;
    width: 120px;
    height: 20px;
    border: 1px solid #7f9db9;
    background: #fff;
}

.fields input {
    padding: 0 0 2px 1px;
    font-family: "DejaVu Sans Mono", monospace;
    font-size: 10px;
    color: #000;
}

.spin {
    display: flex;
}

.spin input {
    flex: 1;
    min-width: 0;
    border: 0;
}

.arrows {
    width: 16px;
    display: flex;
    flex-direction: column;
    background: #b8ccf8;
    border-left: 1px solid #7f9db9;
}

.arrows button {
    height: 9px;
    display: flex;
    align-items: center;
    justify-content: center;
}

.arrows path {
    fill: #445c88;
}

.note {
    grid-column: 3;
    margin: 0 -10px 0 10px;
    text-align: center;
    white-space: nowrap;
}

.ok {
    align-self: flex-end;
    width: 65px;
    height: 21px;
    padding: 1px;
    border: 1px solid #003c74;
    border-radius: 3px;
    background: linear-gradient(#fff, #e8e8e0);
    font-size: 12px;
}

.ok span {
    display: block;
    height: 17px;
    line-height: 15px;
    border: 1px dotted #000;
}
```
FILE: chart.js
```js
// one entry per day: kind, body top, body bottom, high, low
var days = ("d227,237,224,242 d242,263,239,273 u258,260,248,263 u252,261,249,265 u247,253,244,257 d248,258,243,267 u248,260,219,268 u244,250,238,260 u230,243,230,252 d229,243,225,246 " +
    "u243,246,240,250 d237,254,236,256 d250,253,247,257 d247,252,238,252 u235,249,234,250 u231,236,229,240 d230,235,228,238 d234,238,230,240 d235,238,232,241 u230,238,228,241 " +
    "u228,234,222,238 d226,238,226,240 d238,248,236,254 d247,250,244,252 s248,254,243,256 u249,252,246,255 d251,256,249,258 u249,255,247,257 u240,247,238,250 u230,238,229,242 " +
    "d230,234,230,236 u227,233,225,236 u225,229,218,232 u220,226,217,228 u214,222,210,224 d213,223,211,227 s217,221,214,224 u216,219,212,222 u202,217,200,220 u198,202,196,206 " +
    "d198,203,192,205 s202,205,200,207 u200,203,198,206 u194,201,188,204 d193,199,186,200 d197,200,194,202 d198,201,186,204 u195,199,192,203 s187,192,186,196 d174,183,168,185 " +
    "d182,186,179,188 d184,195,181,197 d192,199,190,202 d197,212,195,214 u202,209,200,211 u199,203,195,205 d198,204,195,211 u198,202,194,206 u187,198,185,200 d185,193,179,195 " +
    "s183,188,181,192 d184,189,181,191 u184,187,180,191 u177,185,174,188 u173,177,168,180 d174,180,172,184 d179,186,176,188 u176,186,174,187 d176,184,175,186 d192,199,190,202 " +
    "u187,198,186,198 d184,189,181,190 s190,193,188,195 d192,196,190,199 u193,196,190,198 s191,194,190,196 u192,195,189,197 u191,194,186,196 u190,193,189,196 d192,201,190,203 " +
    "d199,205,197,208 d204,207,202,209 d205,210,203,213 u198,210,196,214 s192,197,190,202 u181,191,178,193 u176,182,173,184 u174,176,171,180 u149,172,144,172 u144,149,137,150 " +
    "u141,144,139,147 u135,141,133,144 d134,137,131,148 u131,135,128,138 d130,141,128,142 u137,141,136,145 d138,153,137,156 u148,155,147,158 u141,148,132,149 d140,145,136,146 " +
    "d145,150,144,152 d149,153,141,156 u147,152,145,153 u140,147,138,148 u130,139,127,140 d142,144,138,151 u141,144,133,146 d145,150,143,151 s146,151,144,154 u147,153,146,154 " +
    "d148,157,147,157 d158,163,155,164 u154,162,153,162 u148,155,146,157 u141,147,139,149 u141,144,138,146 u114,143,114,145 d115,117,108,122 d116,122,113,123 u119,121,117,130 " +
    "d119,126,113,131 u128,131,124,134 d130,132,129,136 d132,140,130,141 d141,146,138,147 d147,154,144,155 u146,153,145,156 d145,147,143,152 d146,148,146,160 u151,153,148,159 " +
    "u130,142,130,148 d129,138,128,139 s137,141,134,146 d136,145,134,146 d144,155,143,156 u149,155,148,159 u142,147,139,151 u134,142,130,147 u125,133,122,140 u117,126,113,127 " +
    "u100,115,99,116 u99,101,96,104 d98,100,81,102 u87,98,85,98 s77,82,71,88 d80,90,78,91 d89,94,84,96 d94,95,90,98 d95,103,91,104 u99,103,97,104 " +
    "u91,99,83,101 d91,95,85,98 d94,97,88,99 d96,106,93,108 u96,106,94,114 u92,95,87,97 s87,92,86,95 d93,106,90,107 u99,106,98,111 d100,109,99,113 d109,111,105,113").split(" ");

var sar = [215, 216, 224, 234, 242, 243, 243, 274, 273, 273, 272, 271, 270, 269, 268, 267, 266, 265, 264, 263, 261, 260, 259, 257, 256, 254, 253,
    223, 223, 224, 225, 225, 257, 257, 255, 252, 250, 248, 246, 242, 238, 233, 228, 223, 218, 214, 210, 206, 203, 200, 196, 193,
    168, 168, 170, 172, 174, 175, 177, 179, 180, 181, 182, 183, 210, 209, 209, 208, 208, 207, 206, 205, 205, 204, 203, 203, 202, 202, 201, 201, 199,
    182, 182, 184, 186, 187, 214, 213, 212, 208, 202, 197, 190, 183, 177, 169, 163, 158, 158, 158, 155, 150,
    128, 129, 130, 130, 130, 130, 131, 132, 133, 134, 137, 140, 142, 165, 164, 163, 161, 158, 156, 153, 149, 146, 143,
    109, 110, 111, 113, 117, 120, 121, 124, 126, 128, 131, 133, 134, 159, 159, 157, 155, 150, 143, 137, 128, 122, 116, 110, 107, 105, 104, 101,
    71, 72, 73, 75, 77, 78, 80, 81];

// the middle of the lower panels is not loaded, so these start at day 86
var volume = [29, 24, 36, 40, 30, 35, 52, 39, 37, 35, 43, 35, 52, 29, 35, 37, 36, 31, 34, 31, 35, 36, 35, 32, 35, 34, 26, 35, 39, 28,
    51, 45, 32, 37, 45, 32, 31, 33, 27, 31, 25, 22, 40, 22, 51, 34, 36, 32, 30, 26, 39, 38, 34, 49, 46, 33, 51, 35, 40, 36,
    35, 42, 39, 34, 37, 26, 38, 29, 37, 29, 29, 27, 28, 39, 27];
var macdLeft = [7, 4, 2, 3, 3, 3, 4, 7, 11, 11, 11, 10, 10, 8, 10, 11, 12, 11, 11, 11, 11, 9, 6, 4, 2, 1, 1, 1, 2, 4, 5, 6, 7];
var macdRight = [3, 3, 7, 10, 12, 13, 13, 13, 10, 9, 5, 2, 0, 0, -2, -3, -4, -2, -1, -2, -2, -4, -4, -5, -6, -8, -8, -5, -3, -2,
    1, 3, 3, 4, 2, 1, 0, -1, -4, -7, -7, -7, -6, -6, -3, -2, -2, -2, -3, -3, -2, 0, 2, 3, 8, 9, 10, 11, 13, 11,
    9, 7, 4, 1, 0, 0, 0, -2, -2, -2, -1, -4, -4, -5, -7];

function dayX(i) {
    return 75 + i * 6;
}

function body(kind, x, top, bottom) {
    if (kind === "u") {
        return `<rect class="up-body" x="${x - 1.5}" y="${top + 0.5}" width="4" height="${Math.max(1, bottom - top - 1)}"/>`;
    }
    return `<rect class="down-body" x="${x - 2}" y="${top}" width="5" height="${bottom - top}"/>`;
}

function drawCandles() {
    let out = "";
    days.forEach(function (day, i) {
        const kind = day[0];
        const v = day.slice(1).split(",").map(Number);
        const x = dayX(i);
        const wick = kind === "d" ? "down-wick" : "up-wick";
        out += `<path class="${wick}" d="M${x + 0.5} ${v[2]}V${v[3]}"/>`;
        if (kind === "s") {
            out += `<rect x="${x - 2}" y="${v[0]}" width="5" height="${v[1] - v[0]}" fill="#fff"/>`;
            out += `<rect x="${x - 1}" y="${v[0] + 1}" width="3" height="1" fill="#ff4040"/>`;
        } else {
            out += body(kind, x, v[0], v[1]);
        }
    });
    document.getElementById("candles").innerHTML = out;
}

function drawSar() {
    document.getElementById("sar").innerHTML = sar.map(function (y, i) {
        return `<circle class="sar-dot" cx="${dayX(i) + 0.5}" cy="${y + 0.5}" r="2"/>`;
    }).join("");
}

function drawVolume() {
    document.getElementById("volume").innerHTML = volume.map(function (h, n) {
        const i = n + 86;
        const kind = days[i][0] === "d" ? "d" : "u";
        return body(kind, dayX(i), 359 - h, 359);
    }).join("");
}

function macdBars(list, first) {
    return list.map(function (h, n) {
        const cls = h < 0 ? "down-wick" : "up-wick";
        return `<path class="${cls}" d="M${dayX(n + first) + 0.5} 396.500v${-h}"/>`;
    }).join("");
}

drawCandles();
drawSar();
drawVolume();
document.getElementById("macd").innerHTML = macdBars(macdLeft, 0) + macdBars(macdRight, 86);
```
